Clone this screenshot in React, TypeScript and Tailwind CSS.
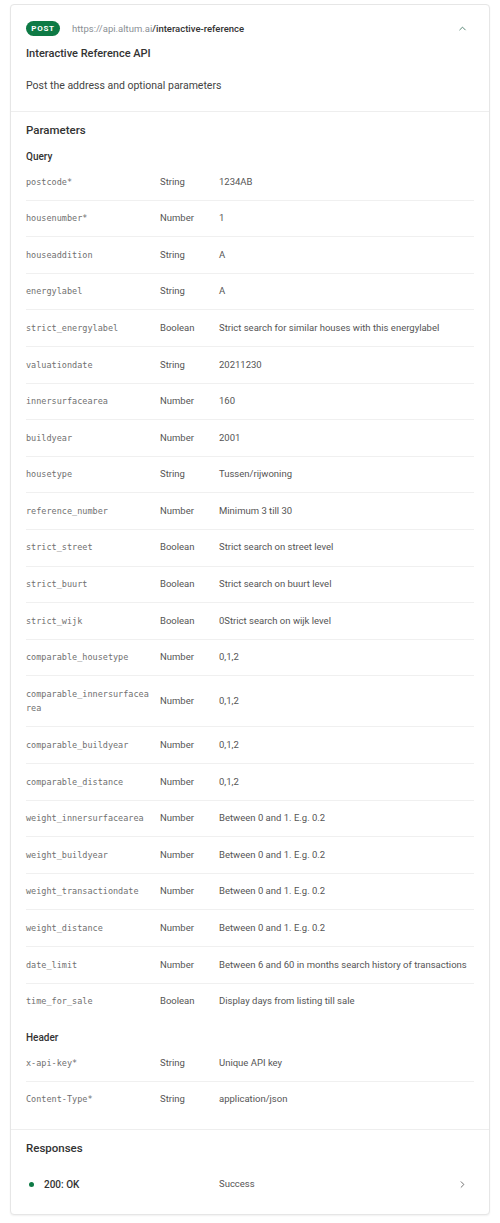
import { ChevronUp, ChevronRight } from "lucide-react";

type Param = { name: string; type: string; desc: string };

const query: Param[] = [
  { name: "postcode*", type: "String", desc: "1234AB" },
  { name: "housenumber*", type: "Number", desc: "1" },
  { name: "houseaddition", type: "String", desc: "A" },
  { name: "energylabel", type: "String", desc: "A" },
  { name: "strict_energylabel", type: "Boolean", desc: "Strict search for similar houses with this energylabel" },
  { name: "valuationdate", type: "String", desc: "20211230" },
  { name: "innersurfacearea", type: "Number", desc: "160" },
  { name: "buildyear", type: "Number", desc: "2001" },
  { name: "housetype", type: "String", desc: "Tussen/rijwoning" },
  { name: "reference_number", type: "Number", desc: "Minimum 3 till 30" },
  { name: "strict_street", type: "Boolean", desc: "Strict search on street level" },
  { name: "strict_buurt", type: "Boolean", desc: "Strict search on buurt level" },
  { name: "strict_wijk", type: "Boolean", desc: "0Strict search on wijk level" },
  { name: "comparable_housetype", type: "Number", desc: "0,1,2" },
  { name: "comparable_innersurfacearea", type: "Number", desc: "0,1,2" },
  { name: "comparable_buildyear", type: "Number", desc: "0,1,2" },
  { name: "comparable_distance", type: "Number", desc: "0,1,2" },
  { name: "weight_innersurfacearea", type: "Number", desc: "Between 0 and 1. E.g. 0.2" },
  { name: "weight_buildyear", type: "Number", desc: "Between 0 and 1. E.g. 0.2" },
  { name: "weight_transactiondate", type: "Number", desc: "Between 0 and 1. E.g. 0.2" },
  { name: "weight_distance", type: "Number", desc: "Between 0 and 1. E.g. 0.2" },
  { name: "date_limit", type: "Number", desc: "Between 6 and 60 in months search history of transactions" },
  { name: "time_for_sale", type: "Boolean", desc: "Display days from listing till sale" },
];

const header: Param[] = [
  { name: "x-api-key*", type: "String", desc: "Unique API key" },
  { name: "Content-Type*", type: "String", desc: "application/json" },
];

function Row({ p }: { p: Param }) {
  return (
    <div className="flex items-center py-[10.55px] border-b border-[#f0f0f0] last:border-b-0">
      <div className="w-[134px] shrink-0 pr-[8px] break-all font-['DejaVu_Sans_Mono',monospace] text-[8.5px] leading-[14.5px] text-[#707070]">
        {p.name}
      </div>
      <div className="w-[59px] shrink-0 text-[9.5px] leading-[14.5px] text-[#555]">{p.type}</div>
      <div className="flex-1 whitespace-nowrap text-[9.5px] leading-[14.5px] text-[#555]">{p.desc}</div>
    </div>
  );
}

function Group({ label, items, className }: { label: string; items: Param[]; className?: string }) {
  return (
    <div className={className}>
      <div className="text-[10px] leading-[14px] font-medium text-[#333]">{label}</div>
      <div>
        {items.map((p) => (
          <Row key={p.name} p={p} />
        ))}
      </div>
    </div>
  );
}

export default function App() {
  return (
    <div className="min-h-screen bg-white px-[10px] pt-[4px] font-['Roboto',sans-serif]">
      <div className="rounded-[4px] border border-[#e6e6e6] bg-white shadow-[0_1px_2px_rgba(0,0,0,0.06)]">
        <div className="px-[15px] pt-[16px] pb-[17px] border-b border-[#eeeeee]">
          <div className="flex items-center">
            <span className="h-[15px] w-[34px] flex items-center justify-center rounded-full bg-[#0e7a45] text-white text-[8px] font-bold tracking-[0.7px]">
              POST
            </span>
            <span className="ml-[12px] text-[9.5px] leading-[15px] text-[#8a8f95]">
              https://api.altum.ai<span className="text-[#333] font-medium">/interactive-reference</span>
            </span>
            <ChevronUp className="ml-auto mr-[6px] text-[#4a7d6a]" size={11} strokeWidth={2} />
          </div>
          <div className="mt-[10px] text-[11px] leading-[16px] font-medium text-[#333]">Interactive Reference API</div>
          <div className="mt-[16px] text-[10.5px] leading-[16px] text-[#444]">Post the address and optional parameters</div>
        </div>

        <div className="px-[15px] pt-[10px] pb-[12px] border-b border-[#eeeeee]">
          <div className="text-[11.5px] leading-[16px] font-medium text-[#333]">Parameters</div>
          <Group label="Query" items={query} className="mt-[12px]" />
          <Group label="Header" items={header} className="mt-[12px]" />
        </div>

        <div className="px-[15px] pt-[10px] pb-[12px]">
          <div className="text-[11.5px] leading-[16px] font-medium text-[#333]">Responses</div>
          <div className="mt-[10px] flex items-center h-[36px]">
            <div className="w-[134px] shrink-0 flex items-center">
              <span className="ml-[3px] w-[5px] h-[5px] rounded-full bg-[#0e7a45]" />
              <span className="ml-[10px] text-[10px] font-medium text-[#333]">200: OK</span>
            </div>
            <div className="w-[59px] shrink-0" />
            <div className="flex-1 text-[9.5px] text-[#555]">Success</div>
            <ChevronRight className="mr-[6px] text-[#666]" size={11} strokeWidth={2} />
          </div>
        </div>
      </div>
    </div>
  );
}
